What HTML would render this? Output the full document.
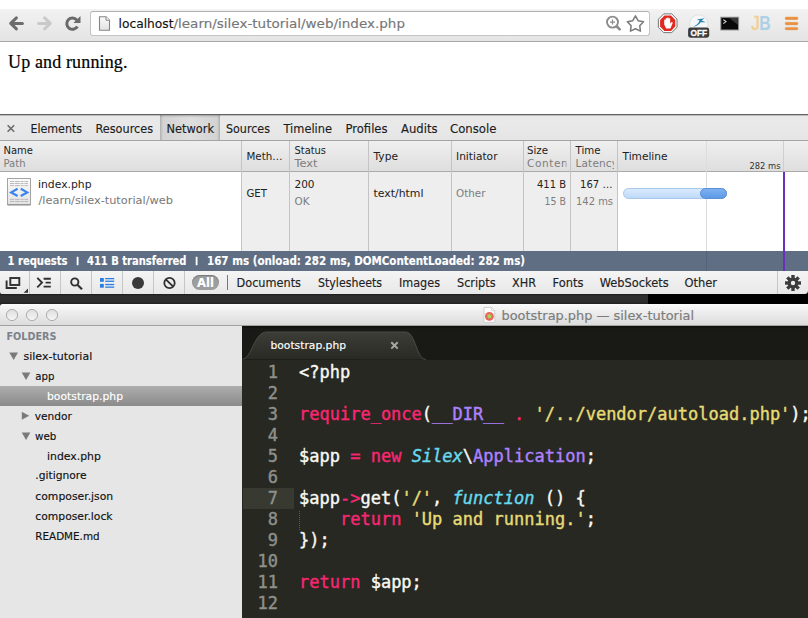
<!DOCTYPE html>
<html>
<head>
<meta charset="utf-8">
<title>bootstrap.php — silex-tutorial</title>
<style>
html,body{margin:0;padding:0;}
body{width:808px;height:618px;overflow:hidden;background:#fff;position:relative;font-family:"DejaVu Sans","Liberation Sans",sans-serif;}
.a{position:absolute;white-space:nowrap;}
/* chrome toolbar */
#tb{left:0;top:9px;width:808px;height:32px;background:linear-gradient(#f2f2f2,#e4e4e4);border-bottom:1px solid #a6a6a6;}
#url{left:90px;top:11px;width:558px;height:23px;background:#fff;border:1px solid #c4c4c4;border-top-color:#b0b0b0;border-radius:3px;}
#pagetxt{left:8px;top:52px;font-family:"Liberation Serif",serif;font-size:18px;line-height:20px;color:#000;letter-spacing:.14px;-webkit-text-stroke:.2px;}
/* devtools */
#dt{left:0;top:114px;width:808px;height:181px;background:#ececec;}
#dttop{left:0;top:114px;width:808px;height:1px;background:#626262;}
#dttabs{left:0;top:115px;width:808px;height:25px;background:linear-gradient(#a6a6a6,#e9e9e9 1.5px,#e9e9e9 40%,#e5e5e5);border-bottom:1px solid #a4a4a4;}
#nettab{left:160px;top:115px;width:60px;height:25px;background:linear-gradient(90deg,#b2b2b2 0,#d3d3d3 3px,#dedede 50%,#d3d3d3 57px,#b2b2b2 60px);box-shadow:inset 0 2px 2px -1px rgba(0,0,0,.28);}
#hdr{left:0;top:141px;width:808px;height:30px;background:linear-gradient(#efefef,#dedede);border-bottom:1px solid #aaaaaa;}
#row0{left:0;top:172px;width:241px;height:79px;background:#fff;}
#row{left:241px;top:172px;width:376px;height:79px;background:#eeeeee;}
#tl{left:617px;top:172px;width:191px;height:79px;background:#fff;}
.vl{position:absolute;width:1px;background:#c4c4c4;top:141px;height:110px;}
#status{left:0;top:251px;width:808px;height:20px;background:#5f6e83;}
#btb{left:0;top:271px;width:808px;height:23px;background:linear-gradient(#f4f4f4,#e8e8e8);}
.bs{position:absolute;top:271px;width:1px;height:23px;background:#c6c6c6;}
#band1{left:0;top:294px;width:648px;height:13px;background:linear-gradient(#1c1c1c,#2e2e2e 2px,#2e2e2e 8px,#202020 10px,#202020);}
#band2{left:648px;top:294px;width:160px;height:10px;background:#000;}
/* sublime */
#title{left:0;top:304px;width:808px;height:21px;background:linear-gradient(#fbfbfb,#f0f0f0 30%,#dcdcdc);border-bottom:1px solid #a2a2a2;border-radius:2.5px 0 0 0;}
#side{left:0;top:326px;width:242px;height:292px;background:#e6e6e6;}
#sel{left:0;top:386px;width:242px;height:20px;background:linear-gradient(#adadad,#8b8b8b);}
#ed{left:242px;top:326px;width:566px;height:292px;background:#272822;}
#tabbar{left:242px;top:326px;width:566px;height:34px;background:linear-gradient(#0e0e0c,#191a16 3px,#191a16);}
#cur{left:243px;top:488px;width:51px;height:21px;background:#383930;}
#guide{left:299px;top:511px;width:0;height:19px;border-left:1px dotted #5a5b54;}
.code{font-family:"DejaVu Sans Mono","Liberation Mono",monospace;font-size:17px;line-height:21px;color:#f8f8f2;-webkit-text-stroke:.4px;}
.ln{color:#8f908a;}
.k{color:#f92672;} .s{color:#e6db74;} .c{color:#ae81ff;} .f{color:#66d9ef;font-style:italic;}
</style>
</head>
<body>
<!-- chrome toolbar -->
<div class="a" id="tb"></div>
<div class="a" id="url"></div>
<div class="a" id="pagetxt">Up and running.</div>
<!-- devtools -->
<div class="a" id="dt"></div>
<div class="a" id="dttabs"></div>
<div class="a" id="dttop"></div>
<div class="a" id="nettab"></div>
<div class="a" id="hdr"></div>
<div class="a" id="row0"></div>
<div class="a" id="row"></div>
<div class="a" id="tl"></div>
<div class="vl" style="left:241px"></div>
<div class="vl" style="left:289px"></div>
<div class="vl" style="left:368px"></div>
<div class="vl" style="left:451px"></div>
<div class="vl" style="left:523px"></div>
<div class="vl" style="left:570px"></div>
<div class="vl" style="left:617px"></div>
<div class="vl" style="left:706px;background:#dcdcdc;height:110px"></div>
<div class="vl" style="left:783px;background:#cfcfcf;height:30px"></div>
<div class="a" id="status"></div>
<div class="a" style="left:706px;top:251px;width:1px;height:20px;background:#54627a"></div>
<div class="a" style="left:783px;top:172px;width:2px;height:99px;background:#6a2fbf"></div>
<div class="a" id="btb"></div>
<div class="bs" style="left:29px"></div>
<div class="bs" style="left:60px"></div>
<div class="bs" style="left:91px"></div>
<div class="bs" style="left:122px"></div>
<div class="bs" style="left:153px"></div>
<div class="bs" style="left:184px"></div>
<div class="bs" style="left:777px"></div>
<div class="a" style="left:227px;top:275px;width:1px;height:15px;background:#777"></div>
<div class="a" style="left:192px;top:275px;width:27px;height:15px;border-radius:8px;background:#9d9d9d;box-shadow:inset 0 1px 1px rgba(0,0,0,.25)"></div>
<div class="a" id="band1"></div>
<div class="a" id="band2"></div>
<!-- sublime -->
<div class="a" id="title"></div>
<div class="a" id="side"></div>
<div class="a" id="sel"></div>
<div class="a" id="ed"></div>
<div class="a" id="tabbar"></div>
<div class="a" id="cur"></div>
<div class="a" id="guide"></div>
<svg class="a" id="ov" width="808" height="618" viewBox="0 0 808 618" style="left:0;top:0;font-family:'DejaVu Sans','Liberation Sans',sans-serif;stroke-width:.15px">
<defs>
<linearGradient id="gIcon" x1="0" y1="0" x2="0" y2="1"><stop offset="0" stop-color="#fbfbfb"/><stop offset="1" stop-color="#e2e2e2"/></linearGradient>
<linearGradient id="gBar1" x1="0" y1="0" x2="0" y2="1"><stop offset="0" stop-color="#dcebfd"/><stop offset="1" stop-color="#bcd8f8"/></linearGradient>
<linearGradient id="gBar2" x1="0" y1="0" x2="0" y2="1"><stop offset="0" stop-color="#7fb2f2"/><stop offset="1" stop-color="#5c98e6"/></linearGradient>
<linearGradient id="gBurger" x1="0" y1="0" x2="0" y2="1"><stop offset="0" stop-color="#f5a04e"/><stop offset="1" stop-color="#e47f2e"/></linearGradient>
<linearGradient id="gLight" x1="0" y1="0" x2="0" y2="1"><stop offset="0" stop-color="#dedede"/><stop offset="1" stop-color="#f7f7f7"/></linearGradient>
<clipPath id="cSize"><rect x="524" y="141" width="42.5" height="110"/></clipPath>
<clipPath id="cTime"><rect x="571" y="141" width="43" height="110"/></clipPath>
<linearGradient id="gTab" x1="0" y1="0" x2="0" y2="1"><stop offset="0" stop-color="#3c3d37"/><stop offset="1" stop-color="#292a24"/></linearGradient>
</defs>
<!-- chrome nav -->
<g fill="none" stroke="#6c6c6c" stroke-width="3" stroke-linecap="round" stroke-linejoin="round">
<path d="M12 23.4H22.4"/><path d="M16.4 17.9L10.7 23.4L16.4 28.9"/>
</g>
<g fill="none" stroke="#c9c9c9" stroke-width="3" stroke-linecap="round" stroke-linejoin="round">
<path d="M38.6 23.4H49"/><path d="M44.6 17.9L50.3 23.4L44.6 28.9"/>
</g>
<path d="M76.8 19.9A5.7 5.7 0 1 0 77.4 26.5" fill="none" stroke="#6a6a6a" stroke-width="3"/>
<path d="M73.4 23H80.5V16Z" fill="#6a6a6a"/>
<!-- page icon -->
<path d="M99.5 16.7H106L109.5 20.2V30.3H99.5Z" fill="url(#gIcon)" stroke="#858585" stroke-width="1.1"/>
<path d="M106 16.7V20.2H109.5" fill="#fff" stroke="#858585" stroke-width="1"/>
<!-- zoom icon -->
<circle cx="612.5" cy="22.1" r="5.5" fill="#fff" stroke="#8c8c8c" stroke-width="1.9"/>
<path d="M610 22.1H615M612.5 19.6V24.6" stroke="#8c8c8c" stroke-width="1.2"/>
<path d="M616.9 26.5L619.7 29.4" stroke="#8c8c8c" stroke-width="2.6" stroke-linecap="round"/>
<!-- star -->
<path d="M635.45 15.80L638.10 20.66L643.53 21.67L639.73 25.69L640.45 31.18L635.45 28.80L630.45 31.18L631.17 25.69L627.37 21.67L632.80 20.66Z" fill="#fff" stroke="#7a7a7a" stroke-width="1.5" stroke-linejoin="round"/>
<!-- abp -->
<path d="M663.7 13.9H671.7L677 19.2V27.3L671.7 32.6H663.7L658.4 27.3V19.2Z" fill="#fff" stroke="#555" stroke-width=".8"/>
<path d="M664.4 15.6H671L675.3 19.9V26.6L671 30.9H664.4L660.1 26.6V19.9Z" fill="#e02a20"/>
<path d="M664.2 24.6V20.2a.75.75 0 0 1 1.5 0V18.7a.75.75 0 0 1 1.5 0V18.2a.75.75 0 0 1 1.5 0V18.9a.75.75 0 0 1 1.5 0V23.8l1.1-1.5a.8.8 0 0 1 1.3.9L670.4 28.6H666.2Z" fill="#fff"/>
<!-- off icon -->
<circle cx="698.8" cy="24" r="9.2" fill="#f6f7f8" stroke="#d9dbde" stroke-width=".8"/>
<path d="M693.2 26.8C696.2 25.6 698.6 23.4 699.6 20.6L696.8 19.6L704.6 18.2L701.6 20.6L706 22.2L700.6 22.2C699 24.8 696.4 26.4 693.2 26.8Z" fill="#2583b5"/>
<rect x="688.1" y="27.6" width="21.1" height="10.1" rx="2.4" fill="#3b3b3b"/>
<text x="690.6" y="36" font-size="9.4" font-weight="bold" fill="#fff" stroke="#fff" stroke-width=".3" textLength="16.6" lengthAdjust="spacingAndGlyphs" font-family="'Liberation Sans',sans-serif">OFF</text>
<!-- terminal -->
<rect x="720.8" y="17.2" width="17.8" height="12.8" fill="#0a0a0a" stroke="#9c9c9c" stroke-width="1"/>
<path d="M729 17.7H738.1V25Z" fill="#4a4a4a" opacity=".7"/>
<path d="M723.3 19.6L726 21.6L723.3 23.6" fill="none" stroke="#d8d8d8" stroke-width="1.1"/>
<!-- JB -->
<text x="751.4" y="30.3" font-size="21" fill="#f2d093" stroke="#f2d093" stroke-width=".7" font-family="'Liberation Sans',sans-serif" textLength="8.2" lengthAdjust="spacingAndGlyphs">J</text>
<text x="759.3" y="30.3" font-size="21" font-weight="bold" fill="#acd1e6" font-family="'Liberation Sans',sans-serif" textLength="11.4" lengthAdjust="spacingAndGlyphs">B</text>
<!-- hamburger -->
<g fill="url(#gBurger)" stroke="#e58a35" stroke-width=".5"><rect x="785.2" y="17.1" width="12.7" height="2.4" rx="1"/><rect x="785.2" y="22.3" width="12.7" height="2.4" rx="1"/><rect x="785.2" y="27.4" width="12.7" height="2.4" rx="1"/></g>
<!-- devtools close -->
<path d="M7.6 125.2L14.2 131.8M14.2 125.2L7.6 131.8" stroke="#6a6a6a" stroke-width="1.6"/>
<!-- file icon -->
<rect x="7.5" y="178.5" width="23" height="26" fill="url(#gIcon)" stroke="#a4a4a4" stroke-width="1"/>
<path d="M7.5 205H30.5" stroke="#8a8a8a" stroke-width="1"/>
<g stroke="#b4b4b4" stroke-width=".9" stroke-dasharray="4 .8 5 .8 3 .8"><path d="M10 181.5H28M10 183.5H28M10 185.6H28M10 199.4H28M10 201.5H28"/></g>
<path d="M17.6 188.8L11.2 192.4L17.6 196M20.8 188.8L27.2 192.4L20.8 196" fill="none" stroke="#3a84f0" stroke-width="2.2"/>
<!-- timeline bar -->
<rect x="623.5" y="188.5" width="103" height="10" rx="5" fill="url(#gBar1)" stroke="#a9c8ee" stroke-width="1"/>
<rect x="700.5" y="188.5" width="26" height="10" rx="5" fill="url(#gBar2)" stroke="#5b8fd6" stroke-width="1"/>
<!-- status separators -->
<rect x="76.7" y="256.8" width="1.8" height="8.4" fill="#fff"/><rect x="195.7" y="256.8" width="1.8" height="8.4" fill="#fff"/>
<!-- bottom toolbar icons -->
<g fill="none" stroke="#303030" stroke-width="1.9">
<rect x="10.3" y="278" width="9" height="7"/><path d="M6.6 280.4V288H16.8"/>
<path d="M37.3 277.8L42 282.6L37.3 287.4"/><path d="M43.6 278.7H50.8M45.6 282.6H50.8M43.6 286.6H50.8"/>
<circle cx="74.8" cy="282" r="3.6"/><path d="M77.6 285L82 289.2" stroke-width="2.2"/>
<circle cx="169.5" cy="283" r="5.2" stroke-width="1.8"/><path d="M165.8 279.3L173.2 286.7" stroke-width="1.8"/>
</g>
<path d="M28 288.4V292.8H23.6Z" fill="#333"/>
<g fill="#2a7de1"><rect x="100" y="278" width="3.8" height="3.8"/><rect x="100" y="283.9" width="3.8" height="3.8"/>
<rect x="105.2" y="278" width="9" height="1.3"/><rect x="105.2" y="280.6" width="9" height="1.3"/><rect x="105.2" y="283.9" width="9" height="1.3"/><rect x="105.2" y="286.5" width="9" height="1.3"/></g>
<circle cx="138" cy="283" r="6" fill="#3a3a3a"/>
<!-- gear -->
<g transform="translate(793 283)" fill="#3c3c3c">
<circle r="5.4"/>
<g id="teeth"><rect x="-1.7" y="-8" width="3.4" height="16"/><rect x="-8" y="-1.7" width="16" height="3.4"/></g>
<g transform="rotate(45)"><rect x="-1.7" y="-8" width="3.4" height="16"/><rect x="-8" y="-1.7" width="16" height="3.4"/></g>
<circle r="2.2" fill="#eee"/>
</g>
<path d="M0 292Q0 294 2 294H0Z" fill="#1c1c1c"/><path d="M808 290.5Q808 294 804.5 294H808Z" fill="#000"/>
<!-- sublime traffic lights -->
<g fill="url(#gLight)" stroke="#adadad" stroke-width="1"><circle cx="12" cy="315" r="5.6"/><circle cx="32" cy="315" r="5.6"/><circle cx="52" cy="315" r="5.6"/></g>
<!-- title file icon -->
<path d="M484 307.4H491.4L494.8 310.8V322.4H484Z" fill="#fdfdfd" stroke="#cfcfcf" stroke-width="1"/>
<path d="M491.4 307.4V310.8H494.8" fill="none" stroke="#cfcfcf" stroke-width=".8"/>
<circle cx="489.4" cy="316.3" r="4.4" fill="#ee5f58"/><path d="M490.22 313.10L490.45 315.23L492.58 315.41L490.85 316.67L491.76 318.61L489.81 317.74L488.58 319.50L488.35 317.37L486.22 317.19L487.95 315.93L487.04 313.99L488.99 314.86Z" fill="#98e05c"/>
<!-- tree triangles -->
<g fill="#7a7a7a">
<path d="M9.3 352.4H18L13.65 360Z"/><path d="M21.7 372.4H30.4L26.05 380Z"/><path d="M21.7 432.4H30.4L26.05 440Z"/>
<path d="M21.8 411.8L29.2 415.8L21.8 419.8Z"/>
</g>
<!-- tab -->
<path d="M242.5 359.2C252 358.5 254 332 266.5 332H405.5C416 332 416 359.5 426 359.5Z" fill="url(#gTab)"/>
<path d="M242.5 359.2C252 358.5 254 332 266.5 332H405.5C416 332 416 359.5 426 359.5" fill="none" stroke="#4a4b45" stroke-width="1"/>
<path d="M391.3 342.2L397.7 348.6M397.7 342.2L391.3 348.6" stroke="#a9a9a3" stroke-width="2"/>
<!-- clipped header texts -->
<text x="527" y="166.6" font-size="10.5" fill="#7d7d7d" textLength="45.5" clip-path="url(#cSize)">Content</text>
<text x="575.5" y="166.6" font-size="10.5" fill="#7d7d7d" textLength="42.5" clip-path="url(#cTime)">Latency</text>

<text x="118.5" y="27.5" font-size="12.5" fill="#111" stroke="#111" font-weight="normal" textLength="55" lengthAdjust="spacingAndGlyphs" >localhost</text>
<text x="173.5" y="27.5" font-size="12.5" fill="#777" stroke="#777" font-weight="normal" textLength="231.5" lengthAdjust="spacingAndGlyphs" >/learn/silex-tutorial/web/index.php</text>
<text x="30.5" y="133" font-size="11.5" fill="#1d1d1d" stroke="#1d1d1d" font-weight="normal" textLength="51.5" lengthAdjust="spacingAndGlyphs" >Elements</text>
<text x="95.5" y="133" font-size="11.5" fill="#1d1d1d" stroke="#1d1d1d" font-weight="normal" textLength="57.5" lengthAdjust="spacingAndGlyphs" >Resources</text>
<text x="166.5" y="133" font-size="11.5" fill="#1d1d1d" stroke="#1d1d1d" font-weight="normal" textLength="47.5" lengthAdjust="spacingAndGlyphs" >Network</text>
<text x="226" y="133" font-size="11.5" fill="#1d1d1d" stroke="#1d1d1d" font-weight="normal" textLength="44" lengthAdjust="spacingAndGlyphs" >Sources</text>
<text x="283.5" y="133" font-size="11.5" fill="#1d1d1d" stroke="#1d1d1d" font-weight="normal" textLength="48.5" lengthAdjust="spacingAndGlyphs" >Timeline</text>
<text x="345.5" y="133" font-size="11.5" fill="#1d1d1d" stroke="#1d1d1d" font-weight="normal" textLength="42" lengthAdjust="spacingAndGlyphs" >Profiles</text>
<text x="401" y="133" font-size="11.5" fill="#1d1d1d" stroke="#1d1d1d" font-weight="normal" textLength="36.5" lengthAdjust="spacingAndGlyphs" >Audits</text>
<text x="450" y="133" font-size="11.5" fill="#1d1d1d" stroke="#1d1d1d" font-weight="normal" textLength="46.5" lengthAdjust="spacingAndGlyphs" >Console</text>
<text x="3.5" y="154" font-size="10.5" fill="#222" stroke="none" font-weight="normal" textLength="29.5" lengthAdjust="spacingAndGlyphs" >Name</text>
<text x="3.5" y="166.6" font-size="10.5" fill="#7d7d7d" stroke="none" font-weight="normal" textLength="22" lengthAdjust="spacingAndGlyphs" >Path</text>
<text x="246.5" y="160" font-size="10.5" fill="#222" stroke="none" font-weight="normal" textLength="36" lengthAdjust="spacingAndGlyphs" >Meth…</text>
<text x="294.5" y="154" font-size="10.5" fill="#222" stroke="none" font-weight="normal" textLength="31.5" lengthAdjust="spacingAndGlyphs" >Status</text>
<text x="294.5" y="166.6" font-size="10.5" fill="#7d7d7d" stroke="none" font-weight="normal" textLength="23" lengthAdjust="spacingAndGlyphs" >Text</text>
<text x="373.5" y="160" font-size="10.5" fill="#222" stroke="none" font-weight="normal" textLength="24.5" lengthAdjust="spacingAndGlyphs" >Type</text>
<text x="456" y="160" font-size="10.5" fill="#222" stroke="none" font-weight="normal" textLength="41.5" lengthAdjust="spacingAndGlyphs" >Initiator</text>
<text x="527" y="154" font-size="10.5" fill="#222" stroke="none" font-weight="normal" textLength="21" lengthAdjust="spacingAndGlyphs" >Size</text>
<text x="575.5" y="154" font-size="10.5" fill="#222" stroke="none" font-weight="normal" textLength="25" lengthAdjust="spacingAndGlyphs" >Time</text>
<text x="622.5" y="160" font-size="10.5" fill="#222" stroke="none" font-weight="normal" textLength="45" lengthAdjust="spacingAndGlyphs" >Timeline</text>
<text x="749.5" y="168.5" font-size="8.5" fill="#333" stroke="none" font-weight="normal" textLength="31" lengthAdjust="spacingAndGlyphs" >282 ms</text>
<text x="38" y="188" font-size="10.5" fill="#222" stroke="none" font-weight="normal" textLength="53.5" lengthAdjust="spacingAndGlyphs" >index.php</text>
<text x="38.5" y="204" font-size="10.5" fill="#777" stroke="none" font-weight="normal" textLength="134.5" lengthAdjust="spacingAndGlyphs" >/learn/silex-tutorial/web</text>
<text x="246.5" y="196.5" font-size="10.5" fill="#222" stroke="none" font-weight="normal" textLength="20.5" lengthAdjust="spacingAndGlyphs" >GET</text>
<text x="294.5" y="188" font-size="10.5" fill="#222" stroke="none" font-weight="normal" textLength="20" lengthAdjust="spacingAndGlyphs" >200</text>
<text x="294.5" y="205" font-size="10.5" fill="#7d7d7d" stroke="none" font-weight="normal" textLength="15" lengthAdjust="spacingAndGlyphs" >OK</text>
<text x="373.5" y="196.5" font-size="10.5" fill="#222" stroke="none" font-weight="normal" textLength="50" lengthAdjust="spacingAndGlyphs" >text/html</text>
<text x="456" y="196.5" font-size="10.5" fill="#7d7d7d" stroke="none" font-weight="normal" textLength="29.5" lengthAdjust="spacingAndGlyphs" >Other</text>
<text x="537" y="188" font-size="10.5" fill="#222" stroke="none" font-weight="normal" textLength="29" lengthAdjust="spacingAndGlyphs" >411 B</text>
<text x="544.5" y="205" font-size="10.5" fill="#7d7d7d" stroke="none" font-weight="normal" textLength="21.5" lengthAdjust="spacingAndGlyphs" >15 B</text>
<text x="580" y="188" font-size="10.5" fill="#222" stroke="none" font-weight="normal" textLength="32.5" lengthAdjust="spacingAndGlyphs" >167 …</text>
<text x="576" y="205" font-size="10.5" fill="#7d7d7d" stroke="none" font-weight="normal" textLength="37" lengthAdjust="spacingAndGlyphs" >142 ms</text>
<text x="7.5" y="265" font-size="11.7" fill="#fff" stroke="#fff" font-weight="bold" textLength="60" lengthAdjust="spacingAndGlyphs" >1 requests</text>
<text x="87" y="265" font-size="11.7" fill="#fff" stroke="#fff" font-weight="bold" textLength="99.5" lengthAdjust="spacingAndGlyphs" >411 B transferred</text>
<text x="207" y="265" font-size="11.7" fill="#fff" stroke="#fff" font-weight="bold" textLength="318" lengthAdjust="spacingAndGlyphs" >167 ms (onload: 282 ms, DOMContentLoaded: 282 ms)</text>
<text x="197" y="287" font-size="11.5" fill="#fff" stroke="#fff" font-weight="bold" textLength="17" lengthAdjust="spacingAndGlyphs" >All</text>
<text x="236.5" y="286.5" font-size="11.5" fill="#222" stroke="#222" font-weight="normal" textLength="64.5" lengthAdjust="spacingAndGlyphs" >Documents</text>
<text x="318" y="286.5" font-size="11.5" fill="#222" stroke="#222" font-weight="normal" textLength="64" lengthAdjust="spacingAndGlyphs" >Stylesheets</text>
<text x="399" y="286.5" font-size="11.5" fill="#222" stroke="#222" font-weight="normal" textLength="41" lengthAdjust="spacingAndGlyphs" >Images</text>
<text x="457" y="286.5" font-size="11.5" fill="#222" stroke="#222" font-weight="normal" textLength="38.5" lengthAdjust="spacingAndGlyphs" >Scripts</text>
<text x="512" y="286.5" font-size="11.5" fill="#222" stroke="#222" font-weight="normal" textLength="24" lengthAdjust="spacingAndGlyphs" >XHR</text>
<text x="552.5" y="286.5" font-size="11.5" fill="#222" stroke="#222" font-weight="normal" textLength="30.9" lengthAdjust="spacingAndGlyphs" >Fonts</text>
<text x="599.7" y="286.5" font-size="11.5" fill="#222" stroke="#222" font-weight="normal" textLength="68.9" lengthAdjust="spacingAndGlyphs" >WebSockets</text>
<text x="684.4" y="286.5" font-size="11.5" fill="#222" stroke="#222" font-weight="normal" textLength="32.6" lengthAdjust="spacingAndGlyphs" >Other</text>
<text x="501.5" y="320" font-size="12.5" fill="#7b7b7b" stroke="#7b7b7b" font-weight="normal" textLength="192.5" lengthAdjust="spacingAndGlyphs" >bootstrap.php — silex-tutorial</text>
<text x="6.5" y="340" font-size="10.5" fill="#7a828c" stroke="none" font-weight="bold" textLength="50" lengthAdjust="spacingAndGlyphs" >FOLDERS</text>
<text x="23.5" y="360" font-size="11" fill="#111" stroke="#111" font-weight="normal" textLength="68.7" lengthAdjust="spacingAndGlyphs" >silex-tutorial</text>
<text x="35.3" y="380" font-size="11" fill="#111" stroke="#111" font-weight="normal" textLength="19.2" lengthAdjust="spacingAndGlyphs" >app</text>
<text x="34.7" y="420" font-size="11" fill="#111" stroke="#111" font-weight="normal" textLength="37.1" lengthAdjust="spacingAndGlyphs" >vendor</text>
<text x="35" y="440" font-size="11" fill="#111" stroke="#111" font-weight="normal" textLength="21.3" lengthAdjust="spacingAndGlyphs" >web</text>
<text x="47" y="460" font-size="11" fill="#111" stroke="#111" font-weight="normal" textLength="53.9" lengthAdjust="spacingAndGlyphs" >index.php</text>
<text x="35.3" y="479" font-size="11" fill="#111" stroke="#111" font-weight="normal" textLength="51.3" lengthAdjust="spacingAndGlyphs" >.gitignore</text>
<text x="35.3" y="499.5" font-size="11" fill="#111" stroke="#111" font-weight="normal" textLength="77.9" lengthAdjust="spacingAndGlyphs" >composer.json</text>
<text x="35.3" y="520" font-size="11" fill="#111" stroke="#111" font-weight="normal" textLength="77.3" lengthAdjust="spacingAndGlyphs" >composer.lock</text>
<text x="35.3" y="540" font-size="11" fill="#111" stroke="#111" font-weight="normal" textLength="64.3" lengthAdjust="spacingAndGlyphs" >README.md</text>
<text x="47" y="399.5" font-size="11" fill="#fff" stroke="#fff" font-weight="normal" textLength="76" lengthAdjust="spacingAndGlyphs" >bootstrap.php</text>
<text x="270.5" y="348.5" font-size="11" fill="#fff" stroke="#fff" font-weight="normal" textLength="75.5" lengthAdjust="spacingAndGlyphs" >bootstrap.php</text>
</svg>
<div class="a code ln" style="left:246px;top:362px;width:32px;text-align:right;">1<br>2<br>3<br>4<br>5<br>6<br>7<br>8<br>9<br>10<br>11<br>12</div>
<div class="a code" id="code" style="left:299px;top:362px;">&lt;?php<br><br><span class="k">require_once</span>(<span class="c">__DIR__</span> <span class="k">.</span> <span class="s">'/../vendor/autoload.php'</span>);<br><br>$app <span class="k">=</span> <span class="k">new</span> <span class="f">Silex</span>\<span class="c">Application</span>;<br><br>$app<span class="k">-&gt;</span>get(<span class="s">'/'</span>, <span class="f">function</span> () {<br>&nbsp;&nbsp;&nbsp;&nbsp;<span class="k">return</span> <span class="s">'Up and running.'</span>;<br>});<br><br><span class="k">return</span> $app;<br></div>
</body>
</html>
